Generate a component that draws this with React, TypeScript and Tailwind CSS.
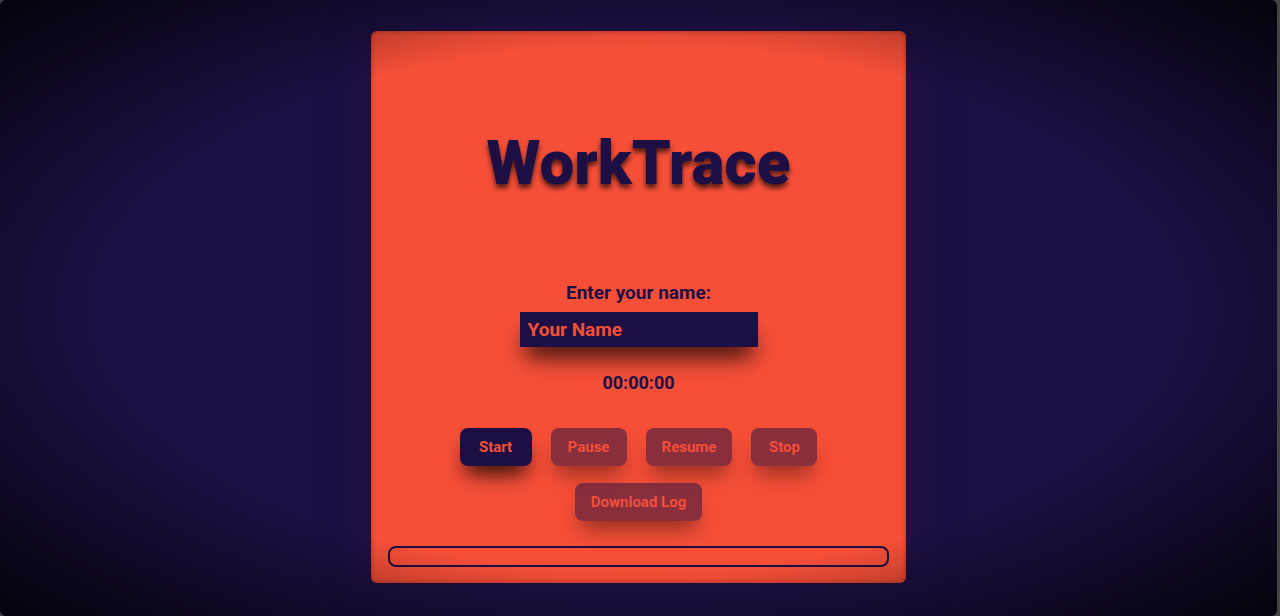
import { useEffect, useState } from "react";

type Status = "idle" | "running" | "paused" | "stopped";

const buttonClass =
  "h-[38px] cursor-pointer rounded-lg bg-[#1d0f43] px-4 text-[15px] font-bold text-[#f64f38] shadow-[0_14px_20px_-6px_rgba(0,0,0,0.8)] disabled:cursor-default disabled:opacity-50";

function format(total: number) {
  return [Math.floor(total / 3600), Math.floor(total / 60) % 60, total % 60]
    .map((part) => String(part).padStart(2, "0"))
    .join(":");
}

export default function App() {
  const [name, setName] = useState("");
  const [seconds, setSeconds] = useState(0);
  const [status, setStatus] = useState<Status>("idle");

  useEffect(() => {
    if (status !== "running") return;
    const timer = setInterval(() => setSeconds((value) => value + 1), 1000);
    return () => clearInterval(timer);
  }, [status]);

  const start = () => {
    setSeconds(0);
    setStatus("running");
  };

  const download = () => {
    const url = URL.createObjectURL(new Blob([`${name}: ${format(seconds)}`]));
    const link = document.createElement("a");
    link.href = url;
    link.download = "worktrace.txt";
    link.click();
    URL.revokeObjectURL(url);
  };

  return (
    <div className="min-h-screen bg-[#454545] pr-[3px] font-['Roboto','Liberation_Sans',sans-serif] text-[#1d0f43]">
      <div className="relative flex min-h-screen justify-center overflow-hidden rounded-md bg-[#1d0f43] px-4 pt-[31px] pb-[33px]">
        <main className="flex w-full max-w-[535px] flex-col items-center rounded-md bg-[#f64f38] px-[17px] pb-4 shadow-[0_0_50px_rgba(40,30,70,0.35),inset_0_0_5px_rgba(80,0,0,0.4)]">
          <h1 className="pt-[92px] text-[62px] leading-[80px] font-black [text-shadow:0_4px_5px_rgba(0,0,0,0.65)]">
            WorkTrace
          </h1>
          <label htmlFor="name" className="mt-20 text-[19px] leading-5 font-bold">
            Enter your name:
          </label>
          <input
            id="name"
            type="text"
            placeholder="Your Name"
            value={name}
            onChange={(event) => setName(event.target.value)}
            className="mt-[9px] h-[35px] w-[238px] bg-[#1d0f43] px-2 text-[19px] font-bold text-[#f64f38] shadow-[0_16px_22px_-6px_rgba(0,0,0,0.8)] outline-none placeholder:text-[#f64f38] placeholder:opacity-100"
          />
          <p className="mt-[26px] text-[18px] leading-5 font-bold">{format(seconds)}</p>
          <div className="mt-[35px] flex flex-wrap justify-center gap-x-[19px] gap-y-[17px] px-12">
            <button type="button" className={`${buttonClass} min-w-[72px]`} disabled={status === "running" || status === "paused"} onClick={start}>
              Start
            </button>
            <button type="button" className={`${buttonClass} min-w-[76px]`} disabled={status !== "running"} onClick={() => setStatus("paused")}>
              Pause
            </button>
            <button type="button" className={buttonClass} disabled={status !== "paused"} onClick={() => setStatus("running")}>
              Resume
            </button>
            <button
              type="button"
              className={`${buttonClass} min-w-[66px]`}
              disabled={status === "idle" || status === "stopped"}
              onClick={() => setStatus("stopped")}
            >
              Stop
            </button>
            <button type="button" className={buttonClass} disabled={status !== "stopped"} onClick={download}>
              Download Log
            </button>
          </div>
          <div className="mt-[25px] h-[21px] w-full overflow-hidden rounded-lg border-2 border-[#1d0f43]">
            <div className="h-full bg-[#1d0f43]" style={{ width: `${((seconds % 3600) / 3600) * 100}%` }} />
          </div>
        </main>
        <div className="pointer-events-none absolute inset-0 bg-[radial-gradient(ellipse_at_center,transparent_60%,rgba(0,0,0,0.85)_100%)]" />
      </div>
    </div>
  );
}
